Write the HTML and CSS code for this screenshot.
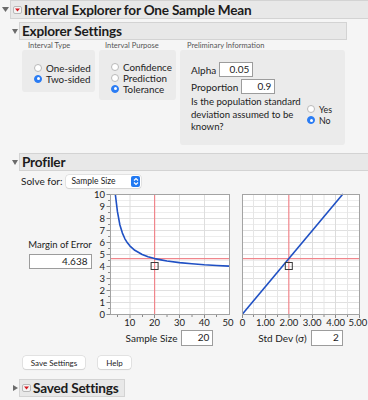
FILE: index.html
```html
<!DOCTYPE html>
<html>
<head>
<meta charset="utf-8">
<link rel="stylesheet" href="styles.css">
</head>
<body>
<div class="app">
  <div class="ohead lvl0">
    <span class="disc"><svg width="7" height="5" viewBox="0 0 7 5"><path d="M0 0H7L3.5 5Z" fill="#6b6b6b"/></svg></span>
    <div class="obox wide">
      <span class="menu"><svg width="9" height="8" viewBox="0 0 9 8"><rect x="0.5" y="0.5" width="8" height="7" rx="1.5" fill="#f4f4f4" stroke="#b8b8b8"/><path d="M2 2.5H7L4.5 5.5Z" fill="#d4161e"/></svg></span>
      <span class="otitle">Interval Explorer for One Sample Mean</span>
    </div>
  </div>

  <div class="section">
    <div class="ohead lvl1">
      <span class="disc"><svg width="6" height="5" viewBox="0 0 6 5"><path d="M0 0H6L3 5Z" fill="#6b6b6b"/></svg></span>
      <div class="obox es"><span class="otitle">Explorer Settings</span></div>
    </div>
    <div class="groups">
      <div class="group">
        <div class="glabel">Interval Type</div>
        <div class="gbox g1">
          <div class="radio"><span class="rb"></span>One-sided</div>
          <div class="radio"><span class="rb on"></span>Two-sided</div>
        </div>
      </div>
      <div class="group">
        <div class="glabel">Interval Purpose</div>
        <div class="gbox g2">
          <div class="radio"><span class="rb"></span>Confidence</div>
          <div class="radio"><span class="rb"></span>Prediction</div>
          <div class="radio"><span class="rb on"></span>Tolerance</div>
        </div>
      </div>
      <div class="group">
        <div class="glabel gl3">Preliminary Information</div>
        <div class="gbox g3">
          <div class="field"><span>Alpha</span><span class="num w-alpha">0.05</span></div>
          <div class="field"><span>Proportion</span><span class="num w-alpha">0.9</span></div>
          <div class="question">
            <div class="qtext">Is the population standard<br>deviation assumed to be<br>known?</div>
            <div class="qopts">
              <div class="radio sm"><span class="rb"></span>Yes</div>
              <div class="radio sm"><span class="rb on"></span>No</div>
            </div>
          </div>
        </div>
      </div>
    </div>

    <div class="ohead lvl1 prof-head">
      <span class="disc"><svg width="6" height="5" viewBox="0 0 6 5"><path d="M0 0H6L3 5Z" fill="#6b6b6b"/></svg></span>
      <div class="obox wide"><span class="otitle">Profiler</span></div>
    </div>

    <div class="solve">
      <span>Solve for:</span>
      <div class="select">
        <span>Sample Size</span>
        <span class="stepper"><svg width="8" height="9" viewBox="0 0 8 9"><path d="M2 3.5L4 1.5L6 3.5M2 5.5L4 7.5L6 5.5" fill="none" stroke="#fff" stroke-width="1.2"/></svg></span>
      </div>
    </div>

    <div class="plots">
      <div class="moe">
        <div class="moe-label">Margin of Error</div>
        <div class="num w-moe">4.638</div>
      </div>

      <div class="pcol p1">
        <svg class="plot" width="140" height="138" viewBox="0 0 140 138">
          <rect x="16.5" y="5.5" width="119" height="120" fill="#fff"/>
          <path d="M17 11.5H135M17 23.5H135M17 35.5H135M17 47.5H135M17 59.5H135M17 71.5H135M17 83.5H135M17 95.5H135M17 107.5H135M17 119.5H135" stroke="#ededed"/>
          <path d="M17 17.5H135M17 29.5H135M17 41.5H135M17 53.5H135M17 65.5H135M17 77.5H135M17 89.5H135M17 101.5H135M17 113.5H135" stroke="#e0e0e0"/>
          <path d="M36 6V125M85.5 6V125M110.5 6V125" stroke="#dedede"/>
          <path d="M12.5 5.5H16M12.5 17.5H16M12.5 29.5H16M12.5 41.5H16M12.5 53.5H16M12.5 65.5H16M12.5 77.5H16M12.5 89.5H16M12.5 101.5H16M12.5 113.5H16M12.5 125.5H16M14 11.5H16M14 23.5H16M14 35.5H16M14 47.5H16M14 59.5H16M14 71.5H16M14 83.5H16M14 95.5H16M14 107.5H16M14 119.5H16" stroke="#8a8a8a"/>
          <path d="M23.5 126V128M36 126V129M48.5 126V128M60.5 126V129M73 126V128M85.5 126V129M98 126V128M110.5 126V129M122.5 126V128" stroke="#8a8a8a"/>
          <path d="M60.6 6V125" stroke="#f0868c" stroke-width="1.2"/>
          <path d="M17 69.6H135" stroke="#f0868c" stroke-width="1.2"/>
          <polyline points="21.3,5 23.4,22.4 25.9,36 28.4,44.1 30.9,49.8 33.4,53.8 35.8,56.8 40.8,61.3 48.2,65.5 54,67.8 60.6,69.6 67,70.9 73,72 85.4,73.6 97.8,74.8 110.2,75.8 122.6,76.5 135,77.1" fill="none" stroke="#1f50c4" stroke-width="1.6" stroke-linejoin="round"/>
          <rect x="57.1" y="73.5" width="7" height="7" fill="none" stroke="#3a3a3a"/>
          <rect x="16.5" y="5.5" width="119" height="120" fill="none" stroke="#a3a3a3"/>
          <g class="ylab" text-anchor="end">
            <text x="11" y="9">10</text>
            <text x="11" y="21">9</text>
            <text x="11" y="33">8</text>
            <text x="11" y="45">7</text>
            <text x="11" y="57">6</text>
            <text x="11" y="69">5</text>
            <text x="11" y="81">4</text>
            <text x="11" y="93">3</text>
            <text x="11" y="105">2</text>
            <text x="11" y="117">1</text>
            <text x="11" y="129">0</text>
          </g>
          <g class="xlab" text-anchor="middle">
            <text x="35.8" y="137">10</text>
            <text x="60.6" y="137">20</text>
            <text x="85.4" y="137">30</text>
            <text x="110.2" y="137">40</text>
            <text x="134" y="137">50</text>
          </g>
        </svg>
        <div class="caption cap1"><span>Sample Size</span><span class="num w-ss">20</span></div>
      </div>

      <div class="pcol p2">
        <svg class="plot" width="132" height="138" viewBox="0 0 132 138">
          <rect x="6.5" y="5.5" width="117" height="120" fill="#fff"/>
          <path d="M7 11.5H123M7 23.5H123M7 35.5H123M7 47.5H123M7 59.5H123M7 71.5H123M7 83.5H123M7 95.5H123M7 107.5H123M7 119.5H123" stroke="#ededed"/>
          <path d="M7 17.5H123M7 29.5H123M7 41.5H123M7 53.5H123M7 65.5H123M7 77.5H123M7 89.5H123M7 101.5H123M7 113.5H123" stroke="#e0e0e0"/>
          <path d="M17.5 6V125M41.5 6V125M64.5 6V125M88 6V125M111.5 6V125" stroke="#e6e6e6"/>
          <path d="M29.5 6V125M76.5 6V125M99.5 6V125" stroke="#dcdcdc"/>
          <path d="M6.5 126V129M17.5 126V128M29.5 126V129M41.5 126V128M53 126V129M64.5 126V128M76.5 126V129M88 126V128M99.5 126V129M111.5 126V128M123.5 126V129" stroke="#8a8a8a"/>
          <path d="M52.8 6V125" stroke="#f0868c" stroke-width="1.2"/>
          <path d="M7 69.6H123" stroke="#f0868c" stroke-width="1.2"/>
          <path d="M6.5 125L106.9 5" fill="none" stroke="#1f50c4" stroke-width="1.6"/>
          <rect x="49.3" y="73.5" width="7" height="7" fill="none" stroke="#3a3a3a"/>
          <rect x="6.5" y="5.5" width="117" height="120" fill="none" stroke="#a3a3a3"/>
          <g class="xlab" text-anchor="middle">
            <text x="6.5" y="137">0</text>
            <text x="29.4" y="137">1.00</text>
            <text x="52.8" y="137">2.00</text>
            <text x="76.2" y="137">3.00</text>
            <text x="99.6" y="137">4.00</text>
            <text x="122" y="137">5.00</text>
          </g>
        </svg>
        <div class="caption cap2"><span>Std Dev (σ)</span><span class="num w-sd">2</span></div>
      </div>
    </div>

    <div class="buttons">
      <span class="btn b-save">Save Settings</span>
      <span class="btn b-help">Help</span>
    </div>

    <div class="ohead lvl1 saved-head">
      <span class="disc"><svg width="5" height="6" viewBox="0 0 5 6"><path d="M0 0V6L5 3Z" fill="#6b6b6b"/></svg></span>
      <div class="obox saved">
        <span class="menu"><svg width="9" height="8" viewBox="0 0 9 8"><rect x="0.5" y="0.5" width="8" height="7" rx="1.5" fill="#f4f4f4" stroke="#b8b8b8"/><path d="M2 2.5H7L4.5 5.5Z" fill="#d4161e"/></svg></span>
        <span class="otitle">Saved Settings</span>
      </div>
    </div>
  </div>
</div>
</body>
</html>
```

FILE: styles.css
```css
* { box-sizing: border-box; }
html, body { margin: 0; padding: 0; }
body {
  background: #f5f5f5;
  font-family: Lato, "Open Sans", "Liberation Sans", sans-serif;
  color: #1c1c1c;
  width: 368px;
  height: 400px;
  overflow: hidden;
}

.ohead { display: flex; align-items: center; }
.lvl0 { height: 19px; }
.lvl0 .disc { width: 10px; }
.disc { display: flex; justify-content: center; align-items: center; width: 8px; }
.disc svg { display: block; }

.obox {
  height: 19px;
  background: #e8e8e8;
  border: 1px solid #d3d3d3;
  display: flex;
  align-items: center;
}
.wide { flex: 1; border-right: none; }
.menu { display: flex; margin-left: 2px; }
.menu svg { display: block; }
.otitle { font-weight: 700; font-size: 13.6px; margin-left: 2px; letter-spacing: -0.2px; white-space: nowrap; }

.section { padding-left: 11px; }
.lvl1 { height: 18px; margin-top: 3px; }
.lvl1 .obox { height: 18px; }
.es { width: 328px; }

.groups { display: flex; gap: 4px; padding-left: 11px; margin-top: 1px; align-items: flex-start; }
.glabel { font-size: 7.5px; line-height: 9px; height: 9px; color: #555; padding-left: 6px; white-space: nowrap; }
.gl3 { padding-left: 7px; }
.gbox { background: #ebebeb; border-radius: 3px; }
.g1 { width: 73px; height: 42px; padding: 12px 0 0 12px; }
.g2 { width: 77px; height: 50px; padding: 11px 0 0 12px; }
.g3 { width: 165px; height: 95px; padding: 12px 0 0 11px; }

.radio { display: flex; align-items: center; height: 11px; font-size: 9.8px; color: #222; white-space: nowrap; }
.rb {
  width: 8px; height: 8px; border-radius: 50%;
  background: #fff; border: 1px solid #b9b9b9;
  margin-right: 4px; flex: none;
  display: flex; align-items: center; justify-content: center;
}
.rb.on { background: #2a7cf4; border-color: #2a7cf4; }
.rb.on::after { content: ""; width: 3px; height: 3px; border-radius: 50%; background: #fff; }
.radio.sm { font-size: 8.8px; }

.field { display: flex; align-items: center; height: 15px; font-size: 10px; margin-bottom: 2px; }
.field .num { margin-left: 3px; }
.num {
  background: #fff;
  border: 1px solid #9c9c9c;
  font-size: 10px;
  text-align: right;
  padding-right: 3px;
  height: 15px;
  line-height: 13px;
  display: inline-block;
}
.w-alpha { width: 34px; }

.question { display: flex; align-items: center; margin-top: 1px; }
.qtext { font-size: 9.6px; line-height: 12.5px; white-space: nowrap; width: 116px; }

.prof-head { margin-top: 8px; }

.solve { display: flex; align-items: center; height: 14px; margin-top: 3px; padding-left: 10px; font-size: 10px; }
.select {
  margin-left: 4px;
  width: 75px; height: 13px;
  background: #fff;
  border-radius: 3px;
  box-shadow: 0 0 0 0.5px #cfcfcf, 0 1px 1px rgba(0,0,0,0.12);
  display: flex; align-items: center; justify-content: space-between;
  font-size: 8.5px; padding-left: 5px; padding-right: 1px;
}
.stepper { width: 9px; height: 11px; background: #2179f2; border-radius: 2px; display: flex; align-items: center; justify-content: center; }
.stepper svg { display: block; }

.plots { display: flex; margin-top: 1px; }
.moe { width: 83px; padding-left: 15px; margin-top: 50px; display: flex; flex-direction: column; align-items: center; }
.moe-label { font-size: 9.5px; line-height: 12px; white-space: nowrap; margin-bottom: 3px; }
.w-moe { width: 63px; height: 15px; }
.pcol { display: flex; flex-direction: column; }
.p2 { margin-left: 2px; }
.plot { display: block; overflow: visible; }
.ylab, .xlab { font-size: 9.5px; fill: #222; font-family: Lato, "Open Sans", sans-serif; }
.caption { display: flex; align-items: center; justify-content: center; height: 16px; margin-top: 3px; font-size: 10px; white-space: nowrap; }
.caption .num { margin-left: 4px; height: 16px; }
.cap1 { padding-left: 11px; }
.cap2 { padding-right: 3px; }
.w-ss { width: 32px; }
.w-sd { width: 32px; }

.buttons { display: flex; margin-top: 10px; padding-left: 12px; }
.btn {
  height: 13px; background: #fff; border-radius: 3px;
  box-shadow: 0 0 0 0.5px #d0d0d0, 0 1px 1px rgba(0,0,0,0.12);
  font-size: 8px; display: flex; align-items: center; justify-content: center;
}
.b-save { width: 62px; }
.b-help { width: 33px; margin-left: 13px; }

.saved-head { margin-top: 10px; }
.saved { width: 106px; }
```
